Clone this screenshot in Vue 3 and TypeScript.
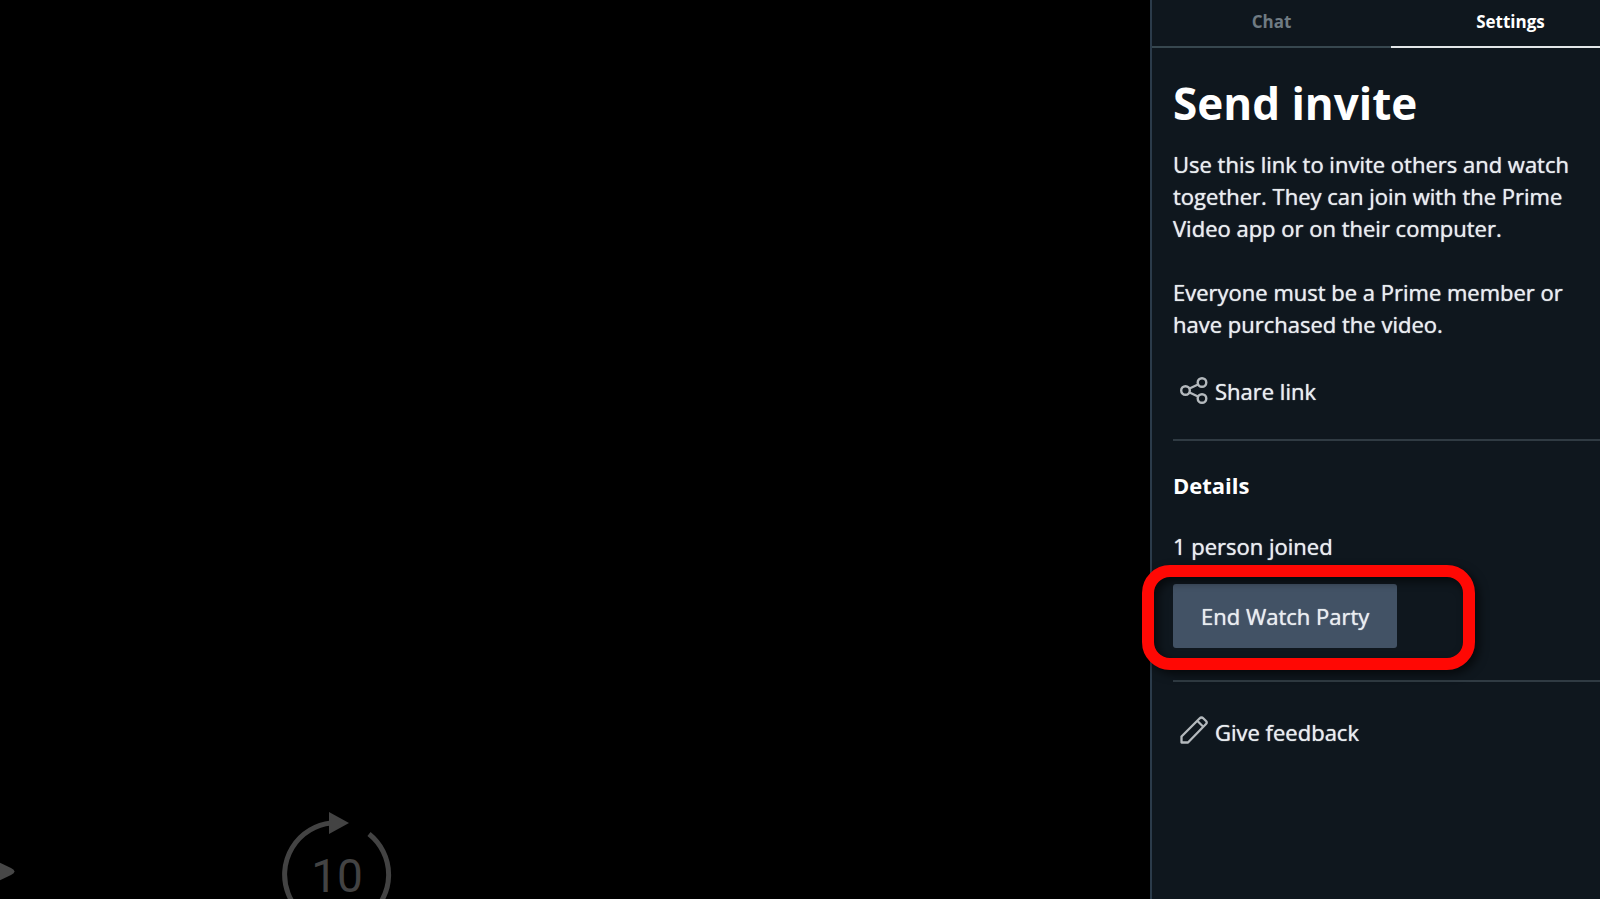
<script setup lang="ts">
import { ref } from 'vue'

type TabId = 'chat' | 'settings'

const tabs: { id: TabId; label: string }[] = [
  { id: 'chat', label: 'Chat' },
  { id: 'settings', label: 'Settings' },
]
const activeTab = ref<TabId>('settings')
const joined = ref(1)
</script>

<template>
  <div class="watch-party">
    <main class="player">
      <div class="controls">
        <button class="control play" type="button" aria-label="Play">
          <svg width="64" height="110" viewBox="0 0 64 110">
            <path d="M0 20 L59 48 Q66 51.500 59 55 L0 83 Z" fill="#474747" />
          </svg>
        </button>
        <button class="control" type="button" aria-label="Forward 10 seconds">
          <svg width="110" height="110" viewBox="0 0 110 110">
            <path d="M49 3 A52 52 0 1 0 87 14" fill="none" stroke="#434343" stroke-width="5" />
            <path d="M47 -8 L67 3 L47 14 Z" fill="#434343" />
            <text x="55" y="72" text-anchor="middle" class="seconds">10</text>
          </svg>
        </button>
      </div>
    </main>

    <aside class="sidebar">
      <nav class="tabs" role="tablist">
        <button
          v-for="tab in tabs"
          :key="tab.id"
          type="button"
          role="tab"
          class="tab"
          :class="{ active: tab.id === activeTab }"
          :aria-selected="tab.id === activeTab"
          @click="activeTab = tab.id"
        >
          {{ tab.label }}
        </button>
      </nav>

      <div class="panel">
        <section class="invite">
          <h1>Send invite</h1>
          <p>Use this link to invite others and watch together. They can join with the Prime Video app or on their computer.</p>
          <p>Everyone must be a Prime member or have purchased the video.</p>
          <button class="action" type="button">
            <svg width="28" height="28" viewBox="0 0 28 28" fill="none" stroke="#b4b9bd" stroke-width="2.400">
              <circle cx="5.500" cy="13.500" r="4.300" />
              <circle cx="22" cy="5.500" r="4.300" />
              <circle cx="22" cy="21.500" r="4.300" />
              <path d="M9.500 11.500 L18 7.500 M9.500 15.500 L18 19.500" />
            </svg>
            Share link
          </button>
        </section>

        <section class="details">
          <h2>Details</h2>
          <p>{{ joined }} person joined</p>
          <div class="end-row">
            <button class="end" type="button">End Watch Party</button>
            <span class="highlight"></span>
          </div>
        </section>

        <section class="feedback">
          <button class="action" type="button">
            <svg width="28" height="32" viewBox="0 0 28 32" fill="none" stroke="#b4b9bd" stroke-width="2.300" stroke-linejoin="round">
              <path d="M1.500 26.500 V20.500 L19.500 2.500 Q21.500 0.500 23.500 2.500 L26 5 Q27.500 6.500 26 8 L8 26.500 Z M17.500 5 L23.500 11" />
            </svg>
            Give feedback
          </button>
        </section>
      </div>
    </aside>
  </div>
</template>

<style>
body {
  background: #000;
}
</style>

<style scoped>
.watch-party {
  display: flex;
  height: 100vh;
  overflow: hidden;
  background: #000;
  color: #e9edf0;
  font-family: "Open Sans", "Noto Sans", sans-serif;
  font-size: 22px;
  font-weight: 500;
  line-height: 32px;
}

button {
  margin: 0;
  padding: 0;
  border: 0;
  background: none;
  color: inherit;
  font: inherit;
  cursor: pointer;
}

.player {
  position: relative;
  flex: 1;
  min-width: 0;
  overflow: hidden;
}

.controls {
  position: absolute;
  bottom: -31px;
  left: -48px;
  display: flex;
  align-items: flex-end;
  gap: 266px;
}

.control {
  display: flex;
}

.control svg {
  overflow: visible;
}

.seconds {
  fill: #434343;
  font-family: Roboto, sans-serif;
  font-size: 46px;
  font-weight: 400;
}

.sidebar {
  box-sizing: border-box;
  position: relative;
  flex: 0 0 450px;
  min-width: 0;
  border-left: 2px solid #2b3b4a;
  background: #0f171e;
}

.tabs {
  display: flex;
  width: 478px;
}

.tab {
  flex: 1;
  height: 48px;
  padding-bottom: 2px;
  border-bottom: 2px solid #37474f;
  color: #6f7b83;
  font-size: 17px;
  font-weight: 700;
  line-height: 24px;
}

.tab.active {
  border-bottom-color: #e2e6e8;
  color: #fff;
}

.panel {
  padding-left: 21px;
}

h1,
h2,
p {
  margin: 0;
}

h1 {
  padding-top: 23px;
  color: #fff;
  font-size: 44px;
  font-weight: 700;
  line-height: 64px;
}

.invite {
  padding-bottom: 32px;
  border-bottom: 2px solid #303b43;
}

.invite p {
  padding: 13px 16px 0 0;
}

.invite p + p {
  padding-top: 32px;
}

p,
.action,
.end {
  text-shadow: 0 0 1px currentColor;
}

.action {
  display: flex;
  align-items: center;
  gap: 7px;
  padding-left: 7px;
}

.invite .action {
  margin-top: 35px;
}

.details {
  padding: 28px 0 32px;
  border-bottom: 2px solid #303b43;
}

h2 {
  color: #fff;
  font-size: 22px;
  font-weight: 700;
  line-height: 32px;
}

.details p {
  padding: 29px 0 22px;
}

.end-row {
  position: relative;
  display: flex;
}

.end {
  padding: 16px 28px;
  border-radius: 3px;
  background: #425265;
}

.highlight {
  position: absolute;
  top: -19px;
  left: -31px;
  box-sizing: border-box;
  width: 333px;
  height: 105px;
  border: 12px solid #ff0804;
  border-radius: 28px;
  box-shadow: 4px 4px 10px #000000a0, inset 4px 4px 10px #000000a0;
  pointer-events: none;
}

.feedback {
  padding-top: 34px;
}
</style>
